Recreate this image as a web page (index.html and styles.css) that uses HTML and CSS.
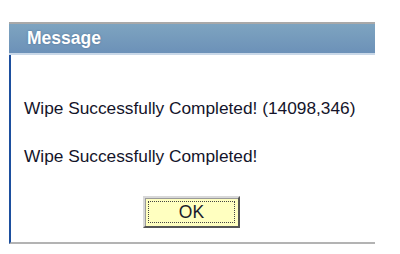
FILE: index.html
```html
<!DOCTYPE html>
<html>
<head>
<meta charset="utf-8">
<link rel="stylesheet" href="styles.css">
</head>
<body>
<div class="dialog">
  <div class="header">Message</div>
  <div class="content">
    <p class="msg first">Wipe Successfully Completed! (14098,346)</p>
    <p class="msg second">Wipe Successfully Completed!</p>
    <div class="actions">
      <button class="ok"><span class="focus">OK</span></button>
    </div>
  </div>
</div>
</body>
</html>
```
FILE: styles.css
```css
html, body {
  margin: 0;
  padding: 0;
  background: #ffffff;
}
body {
  width: 400px;
  height: 254px;
  overflow: hidden;
  font-family: "Liberation Sans", Arial, sans-serif;
}
.dialog {
  margin: 22px 0 0 9px;
  width: 366px;
}
.header {
  height: 29px;
  border-top: 2px solid #a9a9a9;
  border-bottom: 2px solid #c9d8e8;
  background: linear-gradient(#7ea4c0, #6c91b8);
  color: #ffffff;
  font-weight: bold;
  font-size: 17.5px;
  line-height: 29px;
  padding-left: 18px;
  text-shadow: 0 0 2px #4f6f93;
}
.content {
  height: 187px;
  border-left: 2px solid #1d4f9e;
  border-bottom: 2px solid #b3b3b3;
  padding-left: 13px;
  display: flex;
  flex-direction: column;
}
.msg {
  margin: 0;
  font-size: 17.3px;
  line-height: 20px;
  color: #14142a;
  white-space: nowrap;
}
.first {
  margin-top: 43px;
}
.second {
  margin-top: 28px;
}
.actions {
  margin-top: 30px;
  padding-left: 119px;
}
.ok {
  width: 97px;
  height: 32px;
  padding: 3px;
  margin: 0;
  border: 2px solid;
  border-color: #d8d8d8 #555555 #555555 #d8d8d8;
  box-shadow: inset 1px 1px 0 #9a9a9a;
  background: #ffffc0;
  font-family: "Liberation Sans", Arial, sans-serif;
  font-size: 17.5px;
  color: #1a1a2a;
  display: flex;
}
.focus {
  flex: 1;
  border: 1px dotted #444444;
  display: flex;
  align-items: center;
  justify-content: center;
}
```
